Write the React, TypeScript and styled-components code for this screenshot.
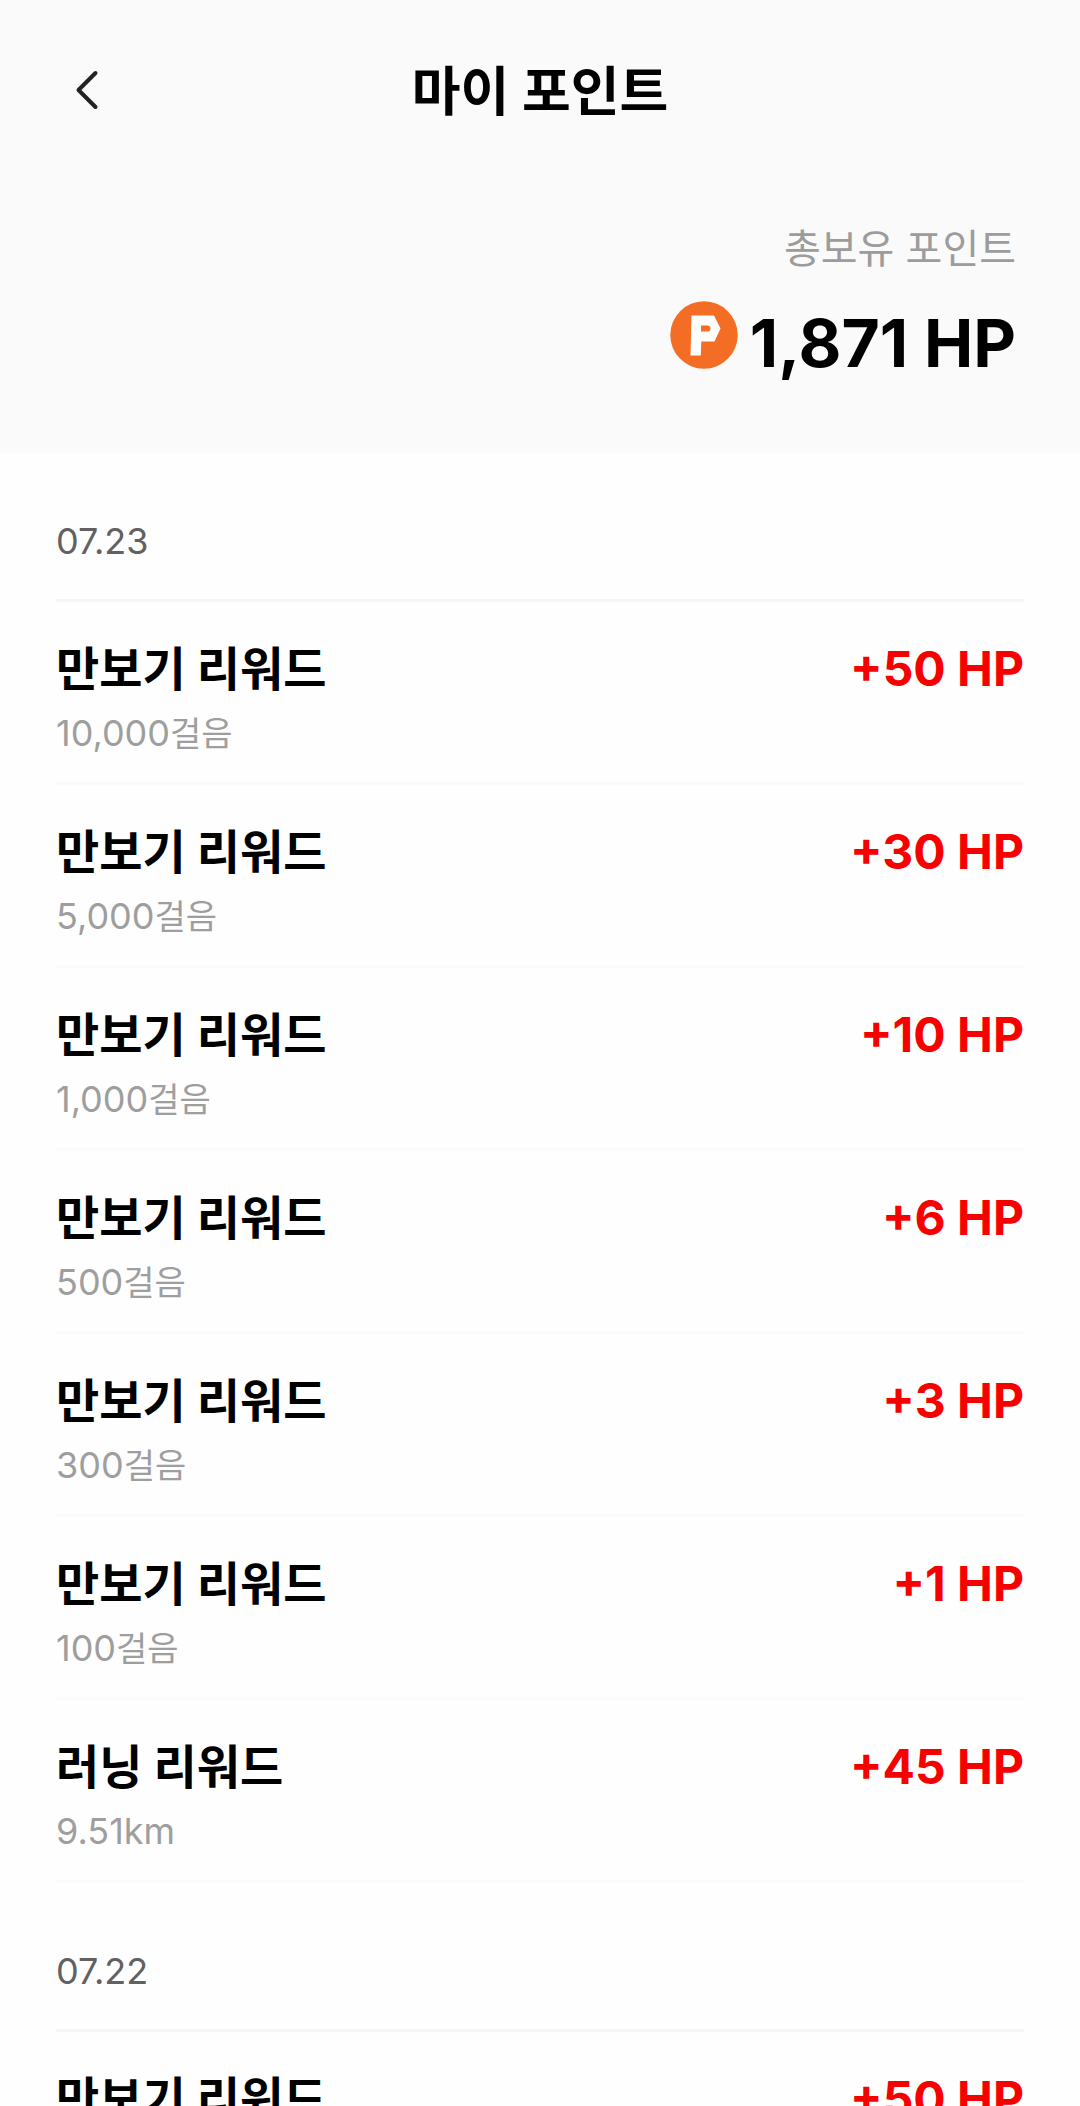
import React from "react";
import styled, { createGlobalStyle } from "styled-components";

const GlobalStyle = createGlobalStyle`
  *, *::before, *::after { box-sizing: border-box; }
  body {
    margin: 0;
    background: #fefefe;
    color: #000;
    font-family: Inter, "Noto Sans CJK KR", sans-serif;
  }
  h1, h2, h3, p, ul { margin: 0; padding: 0; font-weight: inherit; }
  ul { list-style: none; }
`;

const Top = styled.header`
  background: #fafafa;
  padding: 50px 64px 68px;
`;

const NavBar = styled.div`
  display: grid;
  grid-template-columns: 48px 1fr 48px;
  align-items: center;
  height: 80px;
`;

const BackButton = styled.button`
  display: flex;
  align-items: center;
  justify-content: center;
  width: 48px;
  height: 48px;
  padding: 0;
  border: 0;
  background: none;
  color: #222;
  cursor: pointer;
`;

const Title = styled.h1`
  padding-top: 4px;
  font-size: 53px;
  line-height: 64px;
  font-weight: 700;
  text-align: center;
`;

const Summary = styled.section`
  display: flex;
  flex-direction: column;
  align-items: flex-end;
  padding-top: 91px;
`;

const SummaryLabel = styled.h2`
  font-size: 40px;
  line-height: 56px;
  color: #9c9c9c;
`;

const Balance = styled.p`
  display: flex;
  align-items: flex-start;
  gap: 12px;
  padding-top: 24px;
  font-size: 66px;
  line-height: 84px;
  font-weight: 700;
`;

const Coin = styled.svg`
  width: 68px;
  height: 68px;
  flex: none;
`;

const History = styled.main`
  padding: 0 56px;
`;

const DateHeading = styled.h2`
  padding: 64px 0 34px;
  border-bottom: 3px solid #f5f5f5;
  font-size: 36px;
  line-height: 48px;
  color: #616161;
`;

const Entry = styled.li`
  display: flex;
  justify-content: space-between;
  align-items: flex-start;
  padding: 35px 0 17px;
  border-bottom: 3px solid #fafafa;
`;

const EntryTitle = styled.h3`
  font-size: 47px;
  line-height: 64px;
  font-weight: 700;
`;

const EntryDetail = styled.p`
  font-size: 36px;
  line-height: 64px;
  color: #9e9e9e;
`;

const Unit = styled.span`
  font-size: 34px;
  line-height: 1;
`;

const Amount = styled.span`
  font-size: 48px;
  line-height: 64px;
  font-weight: 700;
  color: #f80000;
`;

type Reward = { title: string; value: string; unit: string; points: number };
type Day = { date: string; rewards: Reward[] };

const walk = (value: string, points: number): Reward => ({
  title: "만보기 리워드",
  value,
  unit: "걸음",
  points,
});

const days: Day[] = [
  {
    date: "07.23",
    rewards: [
      walk("10,000", 50),
      walk("5,000", 30),
      walk("1,000", 10),
      walk("500", 6),
      walk("300", 3),
      walk("100", 1),
      { title: "러닝 리워드", value: "9.51km", unit: "", points: 45 },
    ],
  },
  { date: "07.22", rewards: [walk("10,000", 50)] },
];

export default function App() {
  return (
    <>
      <GlobalStyle />
      <Top>
        <NavBar>
          <BackButton type="button" aria-label="뒤로">
            <svg width="48" height="48" viewBox="0 0 48 48" fill="none" aria-hidden="true">
              <path
                d="M31.5 7 14.5 24 31.5 41"
                stroke="currentColor"
                strokeWidth="4"
                strokeLinecap="round"
                strokeLinejoin="round"
              />
            </svg>
          </BackButton>
          <Title>마이 포인트</Title>
        </NavBar>
        <Summary>
          <SummaryLabel>총보유 포인트</SummaryLabel>
          <Balance>
            <Coin viewBox="0 0 68 68" aria-hidden="true">
              <circle cx="34" cy="34" r="33.7" fill="#f36d24" />
              <path
                fill="#fff"
                fillRule="evenodd"
                d="M21.5 14.5H44L50.5 27.5 44.5 40.5H31.3L30.8 54.5H20.5ZM31 24.5V30.5H37.5Q40.5 30.5 40.5 27.5Q40.5 24.5 37.5 24.5Z"
              />
            </Coin>
            <span>1,871 HP</span>
          </Balance>
        </Summary>
      </Top>
      <History>
        {days.map((day) => (
          <section key={day.date}>
            <DateHeading>{day.date}</DateHeading>
            <ul>
              {day.rewards.map((reward) => (
                <Entry key={reward.value}>
                  <div>
                    <EntryTitle>{reward.title}</EntryTitle>
                    <EntryDetail>
                      {reward.value}
                      {reward.unit && <Unit>{reward.unit}</Unit>}
                    </EntryDetail>
                  </div>
                  <Amount>+{reward.points} HP</Amount>
                </Entry>
              ))}
            </ul>
          </section>
        ))}
      </History>
    </>
  );
}
